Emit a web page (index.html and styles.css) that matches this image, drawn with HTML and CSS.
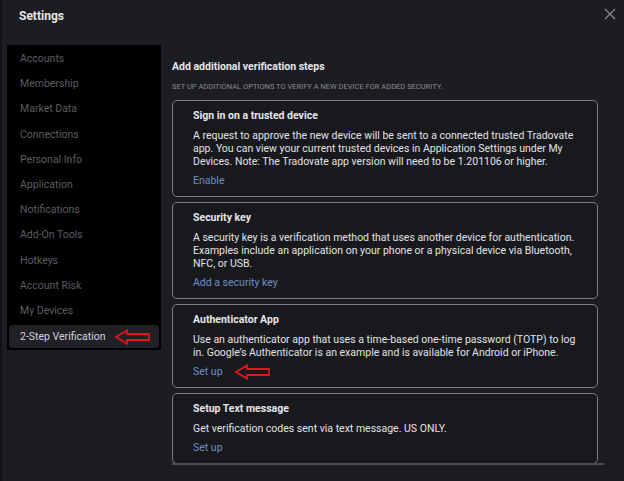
FILE: index.html
```html
<!DOCTYPE html>
<html lang="en">
	<head>
		<title>Settings</title>
		<meta charset="UTF-8" />
		<link rel="stylesheet" href="styles.css">
	</head>
	<body>
		<div class="dialog">
			<div class="dialog-header">
				<h2 class="title">Settings</h2>
				<svg class="close" width="12" height="12" viewBox="0 0 12 12">
					<path d="M1 1 L11 11 M11 1 L1 11" stroke="#8a8a8f" stroke-width="1.3" fill="none"/>
				</svg>
			</div>
			<div class="dialog-body">
				<!-- Left menu -->
				<ul class="menu">
					<li>Accounts</li>
					<li>Membership</li>
					<li>Market Data</li>
					<li>Connections</li>
					<li>Personal Info</li>
					<li>Application</li>
					<li>Notifications</li>
					<li>Add-On Tools</li>
					<li>Hotkeys</li>
					<li>Account Risk</li>
					<li>My Devices</li>
					<li class="active">2-Step Verification
						<svg class="arrow" width="37" height="16" viewBox="0 0 37 16">
							<path d="M2 8 L13 1.5 L13 5 L35 5 L35 11 L13 11 L13 14.5 Z" stroke="#e4141b" stroke-width="1.8" fill="none" stroke-linejoin="miter"/>
						</svg>
					</li>
				</ul>

				<!-- Verification options -->
				<div class="content">
					<h3 class="section-title">Add additional verification steps</h3>
					<p class="section-sub">Set up additional options to verify a new device for added security.</p>

					<div class="card">
						<div class="card-title">Sign in on a trusted device</div>
						<p class="card-text">A request to approve the new device will be sent to a connected trusted Tradovate app. You can view your current trusted devices in Application Settings under My Devices. Note: The Tradovate app version will need to be 1.201106 or higher.</p>
						<a class="card-link">Enable</a>
					</div>

					<div class="card">
						<div class="card-title">Security key</div>
						<p class="card-text">A security key is a verification method that uses another device for authentication. Examples include an application on your phone or a physical device via Bluetooth, NFC, or USB.</p>
						<a class="card-link">Add a security key</a>
					</div>

					<div class="card">
						<div class="card-title">Authenticator App</div>
						<p class="card-text">Use an authenticator app that uses a time-based one-time password (TOTP) to log in. Google’s Authenticator is an example and is available for Android or iPhone.</p>
						<div class="link-row">
							<a class="card-link">Set up</a>
							<svg class="arrow arrow-link" width="37" height="16" viewBox="0 0 37 16">
								<path d="M2 8 L13 1.5 L13 5 L35 5 L35 11 L13 11 L13 14.5 Z" stroke="#e4141b" stroke-width="1.8" fill="none"/>
							</svg>
						</div>
					</div>

					<div class="card">
						<div class="card-title">Setup Text message</div>
						<p class="card-text">Get verification codes sent via text message. US ONLY.</p>
						<a class="card-link">Set up</a>
					</div>
					<div class="scroll-track"></div>
				</div>
			</div>
		</div>
	</body>
</html>
```

FILE: styles.css
```css
html, body {
	margin: 0;
	height: 100%;
	background-color: #1c1d22;
}

body {
	font-family: Roboto, "Liberation Sans", Arial, sans-serif;
	color: #e6e6e8;
	border-left: 2px solid #131317;
	box-sizing: border-box;
}

.dialog-header {
	display: flex;
	justify-content: space-between;
	align-items: flex-start;
	height: 45px;
}

.title {
	margin: 9px 0 0 17px;
	font-size: 12px;
	font-weight: bold;
	line-height: 14px;
}

.close {
	margin: 8px 8px 0 0;
}

.dialog-body {
	display: flex;
	align-items: flex-start;
}

.menu {
	list-style: none;
	margin: 0 0 0 5px;
	padding: 1px 0 1px 0;
	width: 154px;
	background-color: #000;
}

.menu li {
	height: 25.2px;
	line-height: 25.2px;
	padding-left: 13px;
	font-size: 10.5px;
	color: #5c5c62;
}

.menu li.active {
	display: flex;
	align-items: center;
	height: 23px;
	line-height: 23px;
	margin: 2px 2px 1px 2px;
	padding-left: 11px;
	border-radius: 3px;
	background-color: #202127;
	color: #d4d4d8;
}

.arrow {
	display: block;
	margin-left: 9px;
}

.content {
	margin-left: 11px;
	width: 426px;
}

.section-title {
	margin: 15px 0 0 0;
	font-size: 10.5px;
	line-height: 14px;
	font-weight: bold;
}

.section-sub {
	margin: 8px 0 8px 0;
	font-size: 7.5px;
	line-height: 10px;
	text-transform: uppercase;
	color: #8b8b90;
}

.card {
	border: 1px solid #7c7c82;
	border-radius: 5px;
	background-color: #18191d;
	padding: 8px 12px 8px 20px;
	margin-bottom: 5px;
}

.card-title {
	font-size: 10.5px;
	font-weight: bold;
	line-height: 14px;
}

.card-text {
	margin: 6px 0 6px 0;
	font-size: 10.5px;
	line-height: 13px;
	color: #e2e2e4;
}

.card-link {
	display: block;
	font-size: 10.5px;
	line-height: 14px;
	color: #6f8ec2;
}

.link-row {
	display: flex;
	align-items: center;
	height: 14px;
}

.arrow-link {
	margin-left: 11px;
}

.scroll-track {
	height: 2px;
	width: 432px;
	margin-top: -6px;
	background-color: #4c4c52;
}
```
